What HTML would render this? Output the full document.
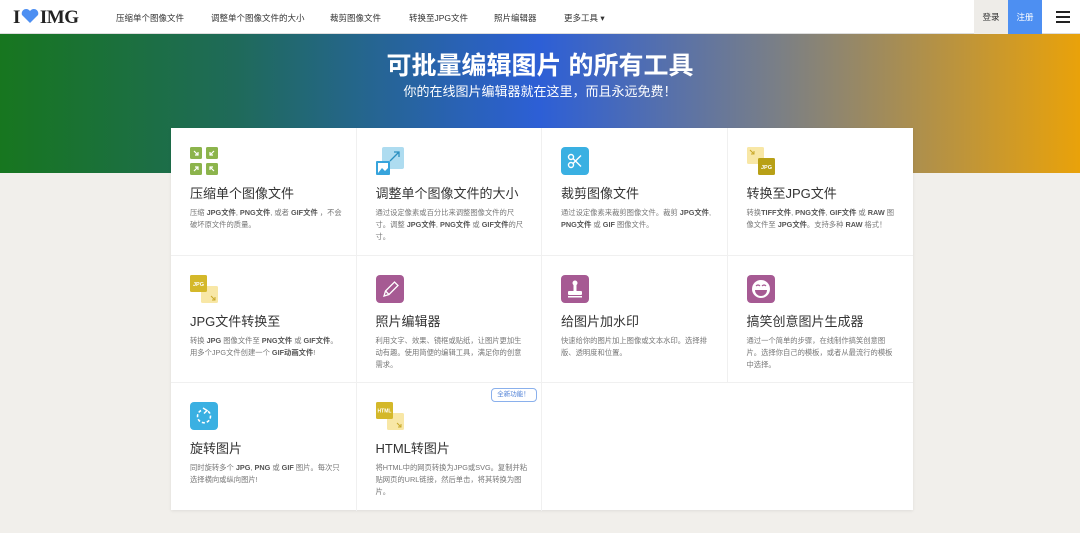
<!DOCTYPE html>
<html><head><meta charset="utf-8"><style>
*{margin:0;padding:0;box-sizing:border-box}
body{width:1080px;height:533px;overflow:hidden;background:#f1efeb;font-family:"Liberation Sans","Noto Sans CJK SC",sans-serif;position:relative}
.nav{position:absolute;left:0;top:0;width:1080px;height:34px;background:#fff;border-bottom:1px solid #ddd}
.logo{position:absolute;left:13px;top:7px;font:bold 19px "Liberation Serif",serif;color:#222;letter-spacing:-0.5px}
.nav a{position:absolute;top:12px;font-size:8.5px;color:#333;text-decoration:none}
.login{position:absolute;left:974px;top:0;width:34px;height:34px;background:#eeece8;font-size:8.5px;color:#333;text-align:center;line-height:34px}
.reg{position:absolute;left:1008px;top:0;width:34px;height:34px;background:#4d8ff2;font-size:8.5px;color:#fff;text-align:center;line-height:34px}
.ham{position:absolute;left:1056px;top:11px;width:14px}
.ham i{display:block;height:1.6px;background:#222;margin-bottom:3.5px}
.hero{position:absolute;left:0;top:34px;width:1080px;height:139px;background:linear-gradient(90deg,#17761f 0%,#1f6a5a 22%,#2d5fd6 50%,#7a7f86 72%,#e9a20a 100%)}
.h1{position:absolute;top:15px;width:1080px;text-align:center;color:#fff;font-size:25px;font-weight:bold;line-height:34px}
.h2{position:absolute;top:49px;width:1080px;text-align:center;color:#fff;font-size:13px;line-height:18px}
.grid{position:absolute;left:171px;top:128px;width:742px;height:382px;background:#fff;box-shadow:0 1px 3px rgba(0,0,0,.08)}
.c{position:absolute;width:185.5px;height:127.5px;border-right:1px solid #f0f0f0;border-bottom:1px solid #f0f0f0}
.ic{position:absolute;left:19px;top:19px;width:28px;height:28px}
.t{position:absolute;left:19px;top:57px;font-size:13px;color:#333;line-height:18px}
.d{position:absolute;left:19px;top:79px;width:152px;font-size:7.3px;line-height:12px;color:#777}
.d b{color:#555}
.badge{position:absolute;top:5px;width:46px;height:14px;border:1px solid #8ab0ec;border-radius:4px;font-size:6.5px;color:#4d7fd6;text-align:center;line-height:12px}
</style></head><body>
<div class="nav">
<div class="logo">I<svg width="20" height="16" viewBox="0 0 20 16" style="vertical-align:-1px"><path d="M10 15 L2 7 A4.5 4.5 0 0 1 10 3 A4.5 4.5 0 0 1 18 7 Z" fill="#4d8ff2"/></svg>IMG</div>
<a style="left:116px">压缩单个图像文件</a>
<a style="left:211px">调整单个图像文件的大小</a>
<a style="left:330px">裁剪图像文件</a>
<a style="left:409px">转换至JPG文件</a>
<a style="left:494px">照片编辑器</a>
<a style="left:564px">更多工具 ▾</a>
<div class="login">登录</div><div class="reg">注册</div>
<div class="ham"><i></i><i></i><i></i></div>
</div>
<div class="hero"><div class="h1">可批量编辑图片 的所有工具</div><div class="h2">你的在线图片编辑器就在这里，而且永远免费！</div></div>
<div class="grid">
<div class="c" style="left:0;top:0"><svg class="ic" viewBox="0 0 28 28"><rect x="0" y="0" width="12" height="12" rx="1.5" fill="#8cb44c"/><rect x="16" y="0" width="12" height="12" rx="1.5" fill="#8cb44c"/><rect x="0" y="16" width="12" height="12" rx="1.5" fill="#8cb44c"/><rect x="16" y="16" width="12" height="12" rx="1.5" fill="#8cb44c"/><path d="M4 4l4 4M8 5v3H5M24 4l-4 4M20 5v3h3M4 24l4-4M5 20h3v3M24 24l-4-4M23 20h-3v3" stroke="#fff" stroke-width="1.2" fill="none"/></svg><div class="t">压缩单个图像文件</div><div class="d">压缩 <b>JPG文件</b>, <b>PNG文件</b>, 或者 <b>GIF文件</b> ，不会破坏原文件的质量。</div></div>
<div class="c" style="left:185.5px;top:0"><svg class="ic" viewBox="0 0 28 28"><rect x="6" y="0" width="22" height="22" rx="2" fill="#aedcf0"/><path d="M14 14l9-9M18 5h5v5" stroke="#2a8fc0" stroke-width="1.3" fill="none"/><rect x="0" y="14" width="14" height="14" rx="1" fill="#37a4dc"/><rect x="2" y="16" width="10" height="10" fill="#fff"/><path d="M2 26l4-5 3 3 3-3v5z" fill="#37a4dc"/></svg><div class="t">调整单个图像文件的大小</div><div class="d">通过设定像素或百分比来调整图像文件的尺寸。调整 <b>JPG文件</b>, <b>PNG文件</b> 或 <b>GIF文件</b>的尺寸。</div></div>
<div class="c" style="left:371px;top:0"><svg class="ic" viewBox="0 0 28 28"><rect width="28" height="28" rx="4" fill="#3ab0e2"/><circle cx="10" cy="18" r="2.5" stroke="#fff" stroke-width="1.4" fill="none"/><circle cx="10" cy="10" r="2.5" stroke="#fff" stroke-width="1.4" fill="none"/><path d="M12 11.5l8 8M12 16.5l8-8" stroke="#fff" stroke-width="1.4"/></svg><div class="t">裁剪图像文件</div><div class="d">通过设定像素来裁剪图像文件。裁剪 <b>JPG文件</b>, <b>PNG文件</b> 或 <b>GIF</b> 图像文件。</div></div>
<div class="c" style="left:556.5px;top:0;border-right:none"><svg class="ic" viewBox="0 0 28 28"><rect x="0" y="0" width="17" height="17" rx="1.5" fill="#f8e7a6"/><path d="M3 3l4 4M7 4v3H4" stroke="#c9a82a" stroke-width="1" fill="none"/><rect x="11" y="11" width="17" height="17" rx="1.5" fill="#b8a016"/><text x="19.5" y="22" font-size="5.5" fill="#fff" text-anchor="middle" font-family="Liberation Sans" font-weight="bold">JPG</text></svg><div class="t">转换至JPG文件</div><div class="d">转换<b>TIFF文件</b>, <b>PNG文件</b>, <b>GIF文件</b> 或 <b>RAW</b> 图像文件至 <b>JPG文件</b>。支持多种 <b>RAW</b> 格式！</div></div>

<div class="c" style="left:0;top:127.5px"><svg class="ic" viewBox="0 0 28 28"><rect x="11" y="11" width="17" height="17" rx="1.5" fill="#f8e7a6"/><path d="M21 21l4 4M25 22v3h-3" stroke="#c9a82a" stroke-width="1" fill="none"/><rect x="0" y="0" width="17" height="17" rx="1.5" fill="#d4b82a"/><text x="8.5" y="11" font-size="5.5" fill="#fff" text-anchor="middle" font-family="Liberation Sans" font-weight="bold">JPG</text></svg><div class="t">JPG文件转换至</div><div class="d">转换 <b>JPG</b> 图像文件至 <b>PNG文件</b> 或 <b>GIF文件</b>。用多个JPG文件创建一个 <b>GIF动画文件</b>!</div></div>
<div class="c" style="left:185.5px;top:127.5px"><svg class="ic" viewBox="0 0 28 28"><rect width="28" height="28" rx="4" fill="#a65a93"/><path d="M8 21l1.5-5 9-9 3.5 3.5-9 9z M9.5 16l3.5 3.5" stroke="#fff" stroke-width="1.3" fill="none"/></svg><div class="t">照片编辑器</div><div class="d">利用文字、效果、镜框或贴纸，让图片更加生动有趣。使用简便的编辑工具，满足你的创意需求。</div></div>
<div class="c" style="left:371px;top:127.5px"><svg class="ic" viewBox="0 0 28 28"><rect width="28" height="28" rx="4" fill="#a65a93"/><circle cx="14" cy="8" r="2.5" fill="#fff"/><rect x="12.5" y="10" width="3" height="6" fill="#fff"/><rect x="7" y="16" width="14" height="4" rx="1" fill="#fff"/><rect x="7" y="21" width="14" height="1.5" fill="#fff"/></svg><div class="t">给图片加水印</div><div class="d">快速给你的图片加上图像或文本水印。选择排版、透明度和位置。</div></div>
<div class="c" style="left:556.5px;top:127.5px;border-right:none"><svg class="ic" viewBox="0 0 28 28"><rect width="28" height="28" rx="4" fill="#a65a93"/><circle cx="14" cy="14" r="9" fill="#fff"/><path d="M8 15h12a6 6 0 0 1-12 0z" fill="#a65a93"/><path d="M9 11q2-2 4 0M15 11q2-2 4 0" stroke="#a65a93" stroke-width="1.2" fill="none"/></svg><div class="t">搞笑创意图片生成器</div><div class="d">通过一个简单的步骤，在线制作搞笑创意图片。选择你自己的模板，或者从最流行的模板中选择。</div></div>

<div class="c" style="left:0;top:255px;border-bottom:none"><svg class="ic" viewBox="0 0 28 28"><rect width="28" height="28" rx="4" fill="#3ab0e2"/><path d="M11 8.5A6.5 6.5 0 1 0 17 8.5" stroke="#fff" stroke-width="1.6" fill="none" stroke-dasharray="3 2"/><path d="M13 6l4 2.5-3 3" stroke="#fff" stroke-width="1.5" fill="none"/></svg><div class="t">旋转图片</div><div class="d">同时旋转多个 <b>JPG</b>, <b>PNG</b> 或 <b>GIF</b> 图片。每次只选择横向或纵向图片!</div></div>
<div class="c" style="left:185.5px;top:255px;border-bottom:none"><div class="badge" style="left:134px">全新功能！</div><svg class="ic" viewBox="0 0 28 28"><rect x="11" y="11" width="17" height="17" rx="1.5" fill="#f8e7a6"/><path d="M21 21l4 4M25 22v3h-3" stroke="#c9a82a" stroke-width="1" fill="none"/><rect x="0" y="0" width="17" height="17" rx="1.5" fill="#d4b82a"/><text x="8.5" y="10.5" font-size="5" fill="#fff" text-anchor="middle" font-family="Liberation Sans" font-weight="bold">HTML</text></svg><div class="t">HTML转图片</div><div class="d">将HTML中的网页转换为JPG或SVG。复制并粘贴网页的URL链接，然后单击，将其转换为图片。</div></div>
</div>
</body></html>
